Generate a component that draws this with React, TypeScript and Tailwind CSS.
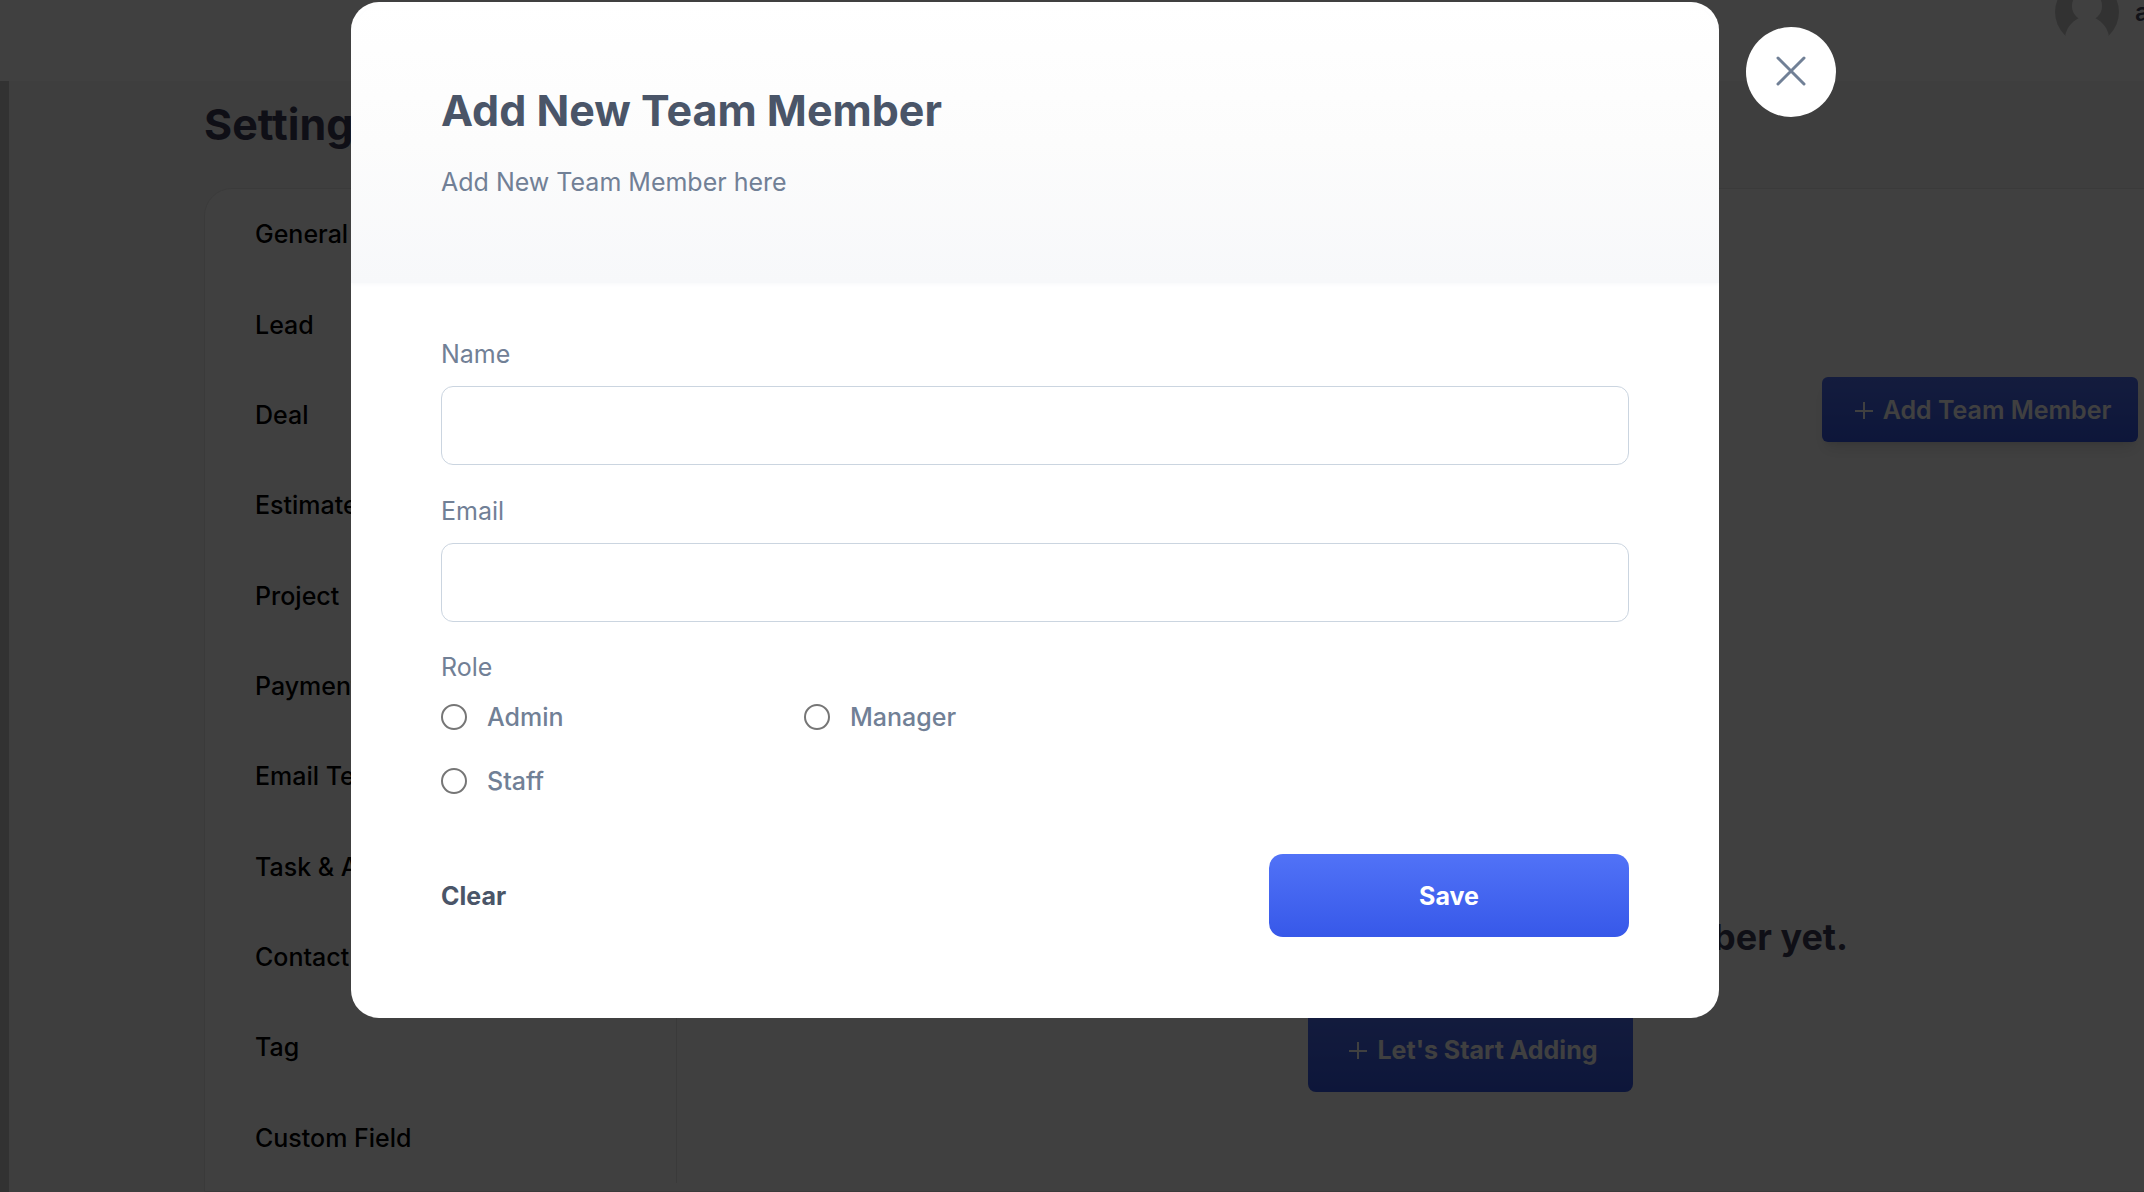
import { useState } from "react";

const menuItems = [
  "General",
  "Lead",
  "Deal",
  "Estimate",
  "Project",
  "Payment",
  "Email Template",
  "Task & Activity",
  "Contact",
  "Tag",
  "Custom Field",
];

const roles = ["Admin", "Manager", "Staff"];

function PlusIcon() {
  return (
    <svg className="w-[18px] h-[18px]" viewBox="0 0 18 18" fill="none" stroke="currentColor" strokeWidth={2}>
      <path d="M9 1v17M0 10h18" />
    </svg>
  );
}

function Avatar() {
  return (
    <svg className="w-16 h-16" viewBox="0 0 64 64">
      <clipPath id="avatar-clip">
        <circle cx="32" cy="32" r="32" />
      </clipPath>
      <g clipPath="url(#avatar-clip)">
        <rect width="64" height="56" fill="#c8c8c8" />
        <circle cx="32" cy="26" r="15" fill="#fff" />
        <path d="M10 57c1-8 6-15 14-19h16c8 4 13 11 14 19z" fill="#fff" />
      </g>
    </svg>
  );
}

export default function App() {
  const [open, setOpen] = useState(true);
  const [name, setName] = useState("");
  const [email, setEmail] = useState("");
  const [role, setRole] = useState("");

  const handleClear = () => {
    setName("");
    setEmail("");
    setRole("");
  };

  return (
    <div className="relative h-screen overflow-hidden bg-[#f5f5f5] font-['Inter',sans-serif] text-[25px] leading-8 text-black">
      <div className="flex flex-col h-full">
        {/* Top bar */}
        <header className="flex justify-end items-start h-[81px] bg-white shrink-0 overflow-hidden">
          <div className="flex items-center gap-4 -mt-5 -mr-[71px] font-semibold text-[#4a4c66]">
            <Avatar />
            <span className="w-20">admin</span>
          </div>
        </header>

        <div className="flex flex-1 min-h-0">
          <aside className="w-[9px] bg-[#c8c8c8] shrink-0" />
          <main className="flex flex-col flex-1 min-w-0 pl-[195px] pt-[15px]">
            <h1 className="text-[43px] leading-[56px] font-bold text-[#3f3f5a]">Settings</h1>
            <div className="flex flex-1 mt-9 -mr-[121px] min-h-0 bg-white border border-[#e8e8e8] rounded-t-[28px]">
              <nav className="grid auto-rows-fr w-[472px] h-[994px] border-r border-[#e8e8e8] shrink-0">
                {menuItems.map((item) => (
                  <a key={item} href="#" className="flex items-center px-[50px] font-medium">
                    {item}
                  </a>
                ))}
              </nav>

              <section className="flex flex-col flex-1 items-center pt-[188px]">
                <button
                  onClick={() => setOpen(true)}
                  className="flex items-center justify-center gap-[10px] self-end mr-[126px] w-[316px] h-[65px] pl-[6px] rounded-md bg-linear-to-b from-[#4f70f5] to-[#3658e6] font-semibold text-white shadow-lg"
                >
                  <PlusIcon /> Add Team Member
                </button>
                <h2 className="mt-[473px] text-[36px] leading-[44px] font-bold text-[#3f3f5a]">
                  You have not added any Team Member yet.
                </h2>
                <button
                  onClick={() => setOpen(true)}
                  className="flex items-center justify-center gap-[10px] mt-[49px] w-[325px] h-[84px] pl-[6px] rounded-lg bg-linear-to-b from-[#4f70f5] to-[#3658e6] font-bold text-white"
                >
                  <PlusIcon /> Let's Start Adding
                </button>
              </section>
            </div>
          </main>
        </div>
      </div>

      {/* Add member modal */}
      {open && (
        <div className="fixed inset-0 flex items-start gap-[27px] pt-[2px] pl-[351px] bg-black/75">
          <div role="dialog" aria-labelledby="modal-title" className="w-[1368px] rounded-[28px] bg-white overflow-hidden text-[#718096]">
            <div className="h-[281px] px-[90px] pt-20 bg-linear-to-b from-white via-[#fcfcfc] to-[#f7f8fa] rounded-t-[40px] shadow-[0_1px_4px_#f7f8fa]">
              <h2 id="modal-title" className="text-[43px] leading-[56px] font-bold text-[#4a5568]">
                Add New Team Member
              </h2>
              <p className="mt-7">Add New Team Member here</p>
            </div>

            <form onSubmit={(e) => e.preventDefault()} className="px-[90px] pt-[55px] pb-[81px]">
              <label htmlFor="name" className="block">Name</label>
              <input
                id="name"
                type="text"
                value={name}
                onChange={(e) => setName(e.target.value)}
                className="block w-full h-[79px] mt-4 px-6 border border-[#cbd5e0] rounded-xl outline-none"
              />
              <label htmlFor="email" className="block mt-[30px]">Email</label>
              <input
                id="email"
                type="email"
                value={email}
                onChange={(e) => setEmail(e.target.value)}
                className="block w-full h-[79px] mt-4 px-6 border border-[#cbd5e0] rounded-xl outline-none"
              />

              <fieldset className="mt-[29px]">
                <legend>Role</legend>
                <div className="grid grid-cols-[363px_363px] gap-y-8 mt-[18px]">
                  {roles.map((r) => (
                    <label key={r} className="flex items-center gap-5 font-medium">
                      <input
                        type="radio"
                        name="role"
                        value={r}
                        checked={role === r}
                        onChange={() => setRole(r)}
                        className="w-[26px] h-[26px] appearance-none rounded-full border-2 border-[#767676] bg-white checked:border-8 checked:border-[#3758e9]"
                      />
                      {r}
                    </label>
                  ))}
                </div>
              </fieldset>

              <div className="flex items-center justify-between mt-[57px]">
                <button type="button" onClick={handleClear} className="font-bold text-[#4a5568]">
                  Clear
                </button>
                <button
                  type="submit"
                  className="w-[360px] h-[83px] rounded-[14px] bg-linear-to-b from-[#5172f7] to-[#3758e9] font-bold text-white"
                >
                  Save
                </button>
              </div>
            </form>
          </div>

          <button
            aria-label="Close"
            onClick={() => setOpen(false)}
            className="flex items-center justify-center w-[90px] h-[90px] mt-[25px] pb-0.5 rounded-full bg-white text-[#718096]"
          >
            <svg className="w-8 h-8" viewBox="0 0 32 32" fill="none" stroke="currentColor" strokeWidth={3} strokeLinecap="round">
              <path d="M3 3l26 26M29 3L3 29" />
            </svg>
          </button>
        </div>
      )}
    </div>
  );
}
